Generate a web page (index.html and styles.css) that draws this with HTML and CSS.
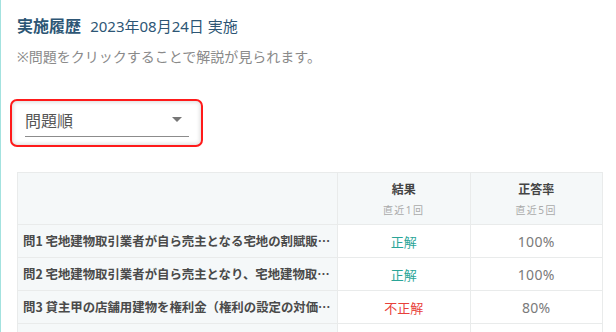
FILE: index.html
```html
<!DOCTYPE html>
<html lang="ja">
<head>
    <meta charset="UTF-8">
    <meta name="viewport" content="width=device-width, initial-scale=1.0">
    <title>実施履歴</title>
    <link rel="stylesheet" href="styles.css">
</head>
<body>

    <div class="page">
        <!-- 見出し -->
        <div class="history-head">
            <span class="history-title">実施履歴</span>
            <span class="history-date">2023年08月24日 実施</span>
        </div>
        <p class="note">※問題をクリックすることで解説が見られます。</p>

        <!-- 並び順 -->
        <div class="sort-box">
            <div class="sort-card">
                <div class="sort-select">
                    <span>問題順</span>
                    <span class="sort-arrow"></span>
                </div>
            </div>
        </div>

        <!-- 結果一覧 -->
        <table class="result-table">
            <thead>
                <tr>
                    <th class="col-question"></th>
                    <th>結果<small>直近1回</small></th>
                    <th>正答率<small>直近5回</small></th>
                </tr>
            </thead>
            <tbody>
                <tr>
                    <td class="col-question"><div class="q-text">問1 宅地建物取引業者が自ら売主となる宅地の割賦販売契約に関する次の記述</div></td>
                    <td class="ok">正解</td>
                    <td class="rate">100%</td>
                </tr>
                <tr>
                    <td class="col-question"><div class="q-text">問2 宅地建物取引業者が自ら売主となり、宅地建物取引業者でない買主</div></td>
                    <td class="ok">正解</td>
                    <td class="rate">100%</td>
                </tr>
                <tr>
                    <td class="col-question"><div class="q-text">問3 貸主甲の店舗用建物を権利金（権利の設定の対価として支払われる</div></td>
                    <td class="ng">不正解</td>
                    <td class="rate">80%</td>
                </tr>
                <tr>
                    <td class="col-question"></td>
                    <td></td>
                    <td></td>
                </tr>
            </tbody>
        </table>
    </div>

</body>
</html>
```

FILE: styles.css
```css
/* ページ全体 */
body {
    margin: 0;
    font-family: 'Noto Sans', 'Noto Sans CJK JP', sans-serif;
    background-color: #ffffff;
    color: #444;
}

.page {
    border-left: 1px solid #a3e2df;
    min-height: 100vh;
    padding: 14px 13px 0 16px;
    box-sizing: border-box;
}

/* 見出し */
.history-head {
    height: 24px;
    line-height: 24px;
    color: #2d5675;
    white-space: nowrap;
}

.history-title {
    font-size: 16px;
    font-weight: bold;
    margin-right: 5px;
}

.history-date {
    font-size: 15px;
}

.note {
    margin: 8px 0 0;
    font-size: 14px;
    line-height: 22px;
    color: #8a8a8a;
}

/* 並び順セレクト */
.sort-box {
    margin: 31px 0 0 -7px;
    width: 193px;
    height: 48px;
    border: 2px solid #ff1a1a;
    border-radius: 7px;
    box-sizing: border-box;
    overflow: hidden;
}

.sort-card {
    height: 100%;
    box-shadow: inset 0 0 5px rgba(0, 0, 0, 0.22);
    padding: 0 12px 0 13px;
    box-sizing: border-box;
}

.sort-select {
    height: 36px;
    border-bottom: 1px solid #8c8c8c;
    display: flex;
    align-items: center;
    justify-content: space-between;
    font-size: 16px;
    color: #555;
    padding-top: 2px;
    box-sizing: border-box;
}

.sort-arrow {
    width: 0;
    height: 0;
    border-left: 5px solid transparent;
    border-right: 5px solid transparent;
    border-top: 5px solid #777;
    margin-right: 7px;
}

/* 結果テーブル */
.result-table {
    margin-top: 25px;
    width: 586px;
    border-collapse: collapse;
    table-layout: fixed;
}

.result-table th,
.result-table td {
    border: 1px solid #e9ebeb;
    padding: 0;
}

.result-table th {
    height: 52px;
    background-color: #f5f8f9;
    font-size: 12px;
    font-weight: bold;
    color: #444;
    line-height: 16px;
    vertical-align: top;
    padding-top: 9px;
    box-sizing: border-box;
}

.result-table th small {
    display: block;
    margin-top: 4px;
    font-size: 10px;
    font-weight: normal;
    color: #aaa;
    letter-spacing: 1.5px;
}

.result-table th.col-question {
    width: 320px;
}

.result-table td {
    height: 32px;
    text-align: center;
    font-size: 13px;
}

.result-table td.col-question {
    background-color: #f5f8f9;
    text-align: left;
    padding: 0 2px 0 5px;
}

.q-text {
    font-family: 'Noto Sans CJK JP', sans-serif;
    font-size: 12.4px;
    font-weight: bold;
    color: #4a4a4a;
    white-space: nowrap;
    overflow: hidden;
    text-overflow: ellipsis;
}

.ok {
    color: #2aa598;
}

.ng {
    color: #e8403a;
}

.result-table td.rate {
    color: #7a7a7a;
    font-size: 14px;
    letter-spacing: 0.3px;
}
```
